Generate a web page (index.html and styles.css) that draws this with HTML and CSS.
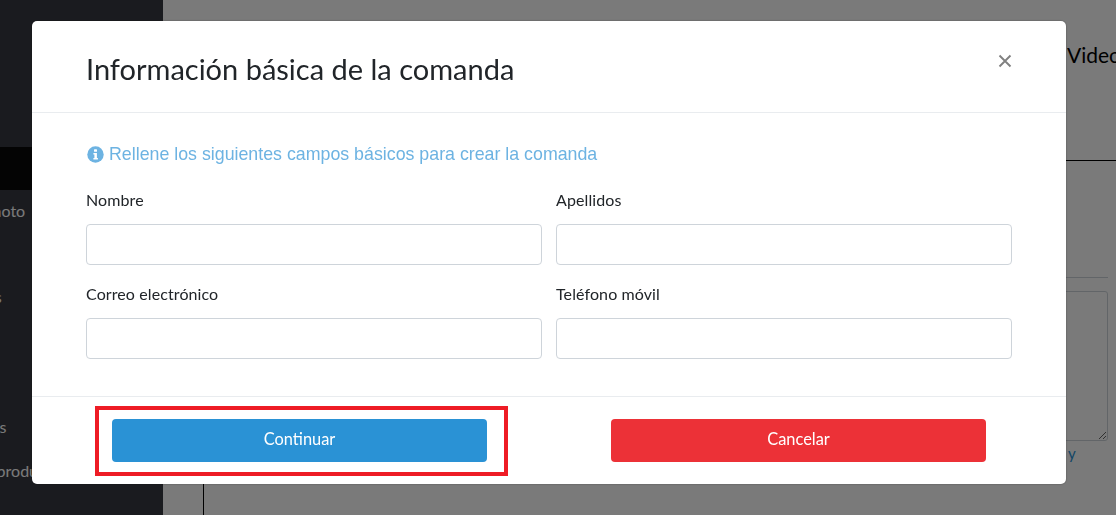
FILE: index.html
```html
<!DOCTYPE html>
<html lang="es">
<head>
    <meta charset="UTF-8">
    <meta name="viewport" content="width=device-width, initial-scale=1.0">
    <title>Información básica de la comanda</title>
    <link rel="stylesheet" href="styles.css">
</head>
<body>
    <div class="page">
        <aside class="sidebar">
            <div class="side-active"></div>
            <ul class="side-menu">
                <li class="item-photo">Photo</li>
                <li class="item-plans">Planes</li>
                <li class="item-extras">Extras</li>
                <li class="item-prod">Mis productos</li>
            </ul>
        </aside>
        <main class="content">
            <header class="content-head">
                <span class="tab-video">Video</span>
            </header>
            <section class="panel">
                <div class="panel-rule"></div>
                <textarea class="panel-text"></textarea>
                <a class="panel-link">y</a>
            </section>
        </main>
    </div>

    <div class="backdrop"></div>

    <div class="modal">
        <div class="modal-header">
            <h1>Información básica de la comanda</h1>
            <svg class="close" width="14" height="14" viewBox="0 0 14 14">
                <path d="M1.5 1.5L12.5 12.5M12.5 1.5L1.5 12.5" stroke="#808080" stroke-width="1.9" fill="none"/>
            </svg>
        </div>
        <div class="modal-body">
            <p class="notice">
                <svg class="notice-icon" width="17" height="17" viewBox="0 0 17 17">
                    <circle cx="8.5" cy="8.5" r="8.2" fill="#6db3e2"/>
                    <rect x="7" y="3.2" width="3" height="2.6" rx="0.6" fill="#fff"/>
                    <path d="M6.4 7h3.5v5h1v1.6H6.4V12h1V8.6h-1z" fill="#fff"/>
                </svg>
                Rellene los siguientes campos básicos para crear la comanda
            </p>
            <form class="fields">
                <div class="field">
                    <label for="nombre">Nombre</label>
                    <input type="text" id="nombre">
                </div>
                <div class="field">
                    <label for="apellidos">Apellidos</label>
                    <input type="text" id="apellidos">
                </div>
                <div class="field">
                    <label for="correo">Correo electrónico</label>
                    <input type="text" id="correo">
                </div>
                <div class="field">
                    <label for="movil">Teléfono móvil</label>
                    <input type="text" id="movil">
                </div>
            </form>
        </div>
        <div class="modal-footer">
            <button class="btn btn-blue">Continuar</button>
            <button class="btn btn-red">Cancelar</button>
        </div>
    </div>

    <div class="callout"></div>
</body>
</html>
```

FILE: styles.css
```css
* {
    box-sizing: border-box;
}

html, body {
    margin: 0;
    padding: 0;
    height: 515px;
    overflow: hidden;
}

body {
    font-family: "Lato", "Open Sans", sans-serif;
    background: #fff;
    color: #212529;
}

.page {
    display: flex;
    height: 515px;
}

/* sidebar, mostly hidden behind the modal */
.sidebar {
    width: 163px;
    flex-shrink: 0;
    background: #383a42;
    padding-top: 147px;
    overflow: hidden;
}

.side-active {
    height: 43px;
    background: #0a0a0a;
}

.side-menu {
    list-style: none;
    margin: 0 0 0 -17px;
    padding: 0;
    color: #fff;
    font-size: 16px;
    line-height: 20px;
    white-space: nowrap;
}

.item-photo {
    margin-top: 11px;
}

.item-plans {
    margin-top: 66px;
    margin-left: -27px;
}

.item-extras {
    margin-top: 110px;
    margin-left: -20px;
}

.item-prod {
    margin-top: 24px;
    margin-left: -16px;
}

/* page behind */
.content {
    flex: 1;
    min-width: 0;
    display: flex;
    flex-direction: column;
    padding-left: 40px;
}

.content-head {
    height: 160px;
    display: flex;
    justify-content: flex-end;
    padding-top: 42px;
    font-size: 21px;
    line-height: 26px;
    color: #000;
    overflow: hidden;
}

.tab-video {
    width: 49px;
    overflow: hidden;
}

.panel {
    flex: 1;
    border-top: 1px solid #000;
    border-left: 1px solid #000;
    padding: 116px 8px 0 0;
    display: flex;
    flex-direction: column;
    align-items: flex-end;
}

.panel-rule {
    width: 100%;
    height: 1px;
    background: #ced4da;
}

.panel-text {
    display: block;
    width: 100%;
    height: 150px;
    margin-top: 13px;
    border: 1px solid #ced4da;
    border-radius: 3px;
    background: #fff;
}

.panel-link {
    align-self: flex-start;
    margin-left: 864px;
    font-size: 15px;
    line-height: 24px;
    color: #2a92d5;
}

.backdrop {
    position: fixed;
    inset: 0;
    background: rgba(0, 0, 0, 0.52);
}

/* modal */
.modal {
    position: fixed;
    left: 32px;
    top: 21px;
    width: 1034px;
    height: 463px;
    background: #fff;
    border-radius: 5px;
    box-shadow: 0 0 2px rgba(0, 0, 0, 0.4);
    display: flex;
    flex-direction: column;
}

.modal-header {
    height: 92px;
    border-bottom: 1px solid #e9ecef;
    display: flex;
    justify-content: space-between;
    align-items: flex-start;
    padding: 0 54px;
}

.modal-header h1 {
    margin: 30px 0 0;
    font-size: 29px;
    line-height: 36px;
    font-weight: 400;
    color: #212529;
}

.close {
    margin-top: 33px;
}

.modal-body {
    flex: 1;
    padding: 31px 54px 0;
}

.notice {
    display: flex;
    align-items: center;
    gap: 5px;
    margin: 0 0 26px;
    padding-left: 1px;
    height: 20px;
    font-family: "Liberation Sans", Arial, sans-serif;
    font-size: 17.8px;
    color: #6db3e2;
}

.notice-icon {
    flex-shrink: 0;
}

.fields {
    display: grid;
    grid-template-columns: 456px 456px;
    column-gap: 14px;
    row-gap: 19px;
}

.field label {
    display: block;
    font-size: 16px;
    letter-spacing: 0.1px;
    line-height: 20px;
    margin-bottom: 14px;
    color: #212529;
}

.field input {
    display: block;
    width: 100%;
    height: 41px;
    border: 1px solid #ced4da;
    border-radius: 4px;
    background: #fff;
}

.modal-footer {
    height: 88px;
    border-top: 1px solid #e9ecef;
    padding: 22px 80px 0 80px;
    display: flex;
    justify-content: space-between;
    align-items: flex-start;
}

.btn {
    width: 375px;
    height: 43px;
    border: none;
    border-radius: 4px;
    padding: 0 0 5px;
    color: #fff;
    font-family: inherit;
    font-size: 16.4px;
    font-weight: 400;
}

.btn-blue {
    background: #2a92d5;
}

.btn-red {
    background: #ec3137;
}

/* red annotation box around the button */
.callout {
    position: fixed;
    left: 95px;
    top: 406px;
    width: 413px;
    height: 70px;
    border: 4px solid #ee1c25;
}
```
